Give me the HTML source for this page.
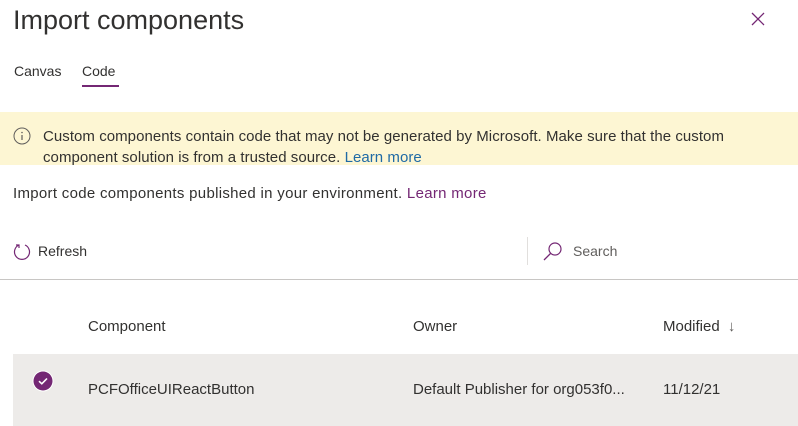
<!DOCTYPE html>
<html><head><style>
body{margin:0;width:798px;height:426px;background:#fff;font-family:"Segoe UI","Liberation Sans",sans-serif;color:#323130;position:relative;overflow:hidden}
.a{position:absolute;white-space:nowrap}
</style></head><body>
<div class="a" style="left:13px;top:5px;font-size:27px;color:#323130">Import components</div>
<svg class="a" style="left:750px;top:11px" width="16" height="16"><path d="M2 2L14 14M14 2L2 14" stroke="#742774" stroke-width="1.3"/></svg>
<div class="a" style="left:14px;top:63px;font-size:14px">Canvas</div>
<div class="a" style="left:82px;top:63px;font-size:14px">Code</div>
<div class="a" style="left:82px;top:85px;width:37px;height:2px;background:#742774"></div>
<div class="a" style="left:0;top:112px;width:798px;height:53px;background:#fdf6d3"></div>
<svg class="a" style="left:13px;top:127px" width="18" height="18"><circle cx="9" cy="9" r="8" fill="none" stroke="#605e5c" stroke-width="1"/><path d="M9 8v5" stroke="#605e5c" stroke-width="1.2"/><circle cx="9" cy="5.5" r=".8" fill="#605e5c"/></svg>
<div class="a" style="left:43px;top:126px;font-size:15px;line-height:21px;letter-spacing:0.05px">Custom components contain code that may not be generated by Microsoft. Make sure that the custom<br>component solution is from a trusted source. <span style="color:#1f6aa5">Learn more</span></div>
<div class="a" style="left:13px;top:185px;font-size:15px;letter-spacing:0.3px">Import code components published in your environment. <span style="color:#742774">Learn more</span></div>
<svg class="a" style="left:12px;top:242px" width="20" height="20"><path d="M7 3A7.5 7.5 0 1 0 13 3" fill="none" stroke="#742774" stroke-width="1.2"/><path d="M4 3h3v3" fill="none" stroke="#742774" stroke-width="1.2"/></svg>
<div class="a" style="left:38px;top:243px;font-size:14px">Refresh</div>
<div class="a" style="left:527px;top:237px;width:1px;height:28px;background:#e1dfdd"></div>
<svg class="a" style="left:541px;top:240px" width="24" height="24"><circle cx="14" cy="9" r="6" fill="none" stroke="#742774" stroke-width="1.2"/><path d="M9.5 13.5L3 20" stroke="#742774" stroke-width="1.3"/></svg>
<div class="a" style="left:573px;top:243px;font-size:14px;color:#605e5c">Search</div>
<div class="a" style="left:0;top:279px;width:798px;height:1px;background:#c8c6c4"></div>
<div class="a" style="left:88px;top:318px;font-size:15px">Component</div>
<div class="a" style="left:413px;top:318px;font-size:15px">Owner</div>
<div class="a" style="left:663px;top:318px;font-size:15px">Modified <span style="color:#605e5c;margin-left:4px">&#8595;</span></div>
<div class="a" style="left:13px;top:354px;width:785px;height:1px;background:#edebe9"></div>
<div class="a" style="left:13px;top:355px;width:785px;height:71px;background:#edebe9"></div>
<svg class="a" style="left:32px;top:370px" width="22" height="22"><circle cx="11" cy="11" r="10.5" fill="#fff"/><circle cx="11" cy="11" r="9.5" fill="#742774"/><path d="M7 11.2l2.8 2.6L15 8.5" fill="none" stroke="#fff" stroke-width="1.6"/></svg>
<div class="a" style="left:88px;top:381px;font-size:15px">PCFOfficeUIReactButton</div>
<div class="a" style="left:413px;top:381px;font-size:15px">Default Publisher for org053f0...</div>
<div class="a" style="left:663px;top:381px;font-size:15px">11/12/21</div>
</body></html>
